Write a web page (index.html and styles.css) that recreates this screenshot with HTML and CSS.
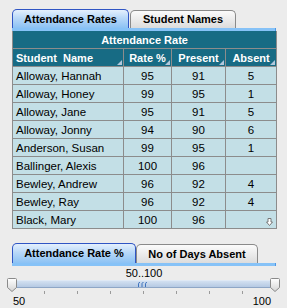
FILE: index.html
```html
<!DOCTYPE html>
<html lang="en">
<head>
    <meta charset="UTF-8">
    <title>Attendance Rates</title>
    <link rel="stylesheet" href="styles.css">
</head>
<body>
    <div class="panel">
        <div class="tabs">
            <div class="tab tab-active tab-rates">Attendance Rates</div>
            <div class="tab tab-names">Student Names</div>
        </div>
        <div class="tab-strip"></div>

        <table class="grid">
            <colgroup>
                <col class="col-name">
                <col class="col-rate">
                <col class="col-present">
                <col class="col-absent">
            </colgroup>
            <tr class="title-row"><th colspan="4">Attendance Rate</th></tr>
            <tr class="head-row">
                <th class="left">Student&nbsp; Name<span class="sort"></span></th>
                <th>Rate %<span class="sort"></span></th>
                <th>Present<span class="sort"></span></th>
                <th>Absent<span class="sort"></span></th>
            </tr>
            <tr><td class="left">Alloway, Hannah</td><td>95</td><td>91</td><td>5</td></tr>
            <tr><td class="left">Alloway, Honey</td><td>99</td><td>95</td><td>1</td></tr>
            <tr><td class="left">Alloway, Jane</td><td>95</td><td>91</td><td>5</td></tr>
            <tr><td class="left">Alloway, Jonny</td><td>94</td><td>90</td><td>6</td></tr>
            <tr><td class="left">Anderson, Susan</td><td>99</td><td>95</td><td>1</td></tr>
            <tr><td class="left">Ballinger, Alexis</td><td>100</td><td>96</td><td></td></tr>
            <tr><td class="left">Bewley, Andrew</td><td>96</td><td>92</td><td>4</td></tr>
            <tr><td class="left">Bewley, Ray</td><td>96</td><td>92</td><td>4</td></tr>
            <tr><td class="left">Black, Mary</td><td>100</td><td>96</td><td class="last-cell">
                <svg class="more" width="7" height="8" viewBox="0 0 7 8"><path d="M2 0.5h3v3.5h1.5L3.5 7.5 0.5 4H2z" fill="#fff" stroke="#777" stroke-width="1"/></svg>
            </td></tr>
        </table>

        <div class="tabs tabs-bottom">
            <div class="tab tab-active tab-rate">Attendance Rate %</div>
            <div class="tab tab-days">No of Days Absent</div>
        </div>
        <div class="tab-strip"></div>

        <div class="range-label">50..100</div>
        <div class="slider">
            <div class="track">
                <svg class="grip" width="10" height="5" viewBox="0 0 10 5"><path d="M0.5 5V1.5Q0.5 0.5 2 0.5M4 5V1.5Q4 0.5 5.5 0.5M7.5 5V1.5Q7.5 0.5 9 0.5" fill="none" stroke="#3f73bd" stroke-width="1"/></svg>
            </div>
            <svg class="thumb thumb-left" width="10" height="14" viewBox="0 0 10 14"><path d="M1.5 0.5h7a1 1 0 0 1 1 1v8l-4.5 4-4.5-4v-8a1 1 0 0 1 1-1z" fill="url(#tg)" stroke="#8a8a8a"/><defs><linearGradient id="tg" x1="0" y1="0" x2="0" y2="1"><stop offset="0" stop-color="#ffffff"/><stop offset="1" stop-color="#d4d4d4"/></linearGradient></defs></svg>
            <svg class="thumb thumb-right" width="10" height="14" viewBox="0 0 10 14"><path d="M1.5 0.5h7a1 1 0 0 1 1 1v8l-4.5 4-4.5-4v-8a1 1 0 0 1 1-1z" fill="url(#tg)" stroke="#8a8a8a"/></svg>
        </div>
        <div class="ticks">
            <span class="tick hidden"></span>
            <span class="tick"></span>
            <span class="tick"></span>
            <span class="tick"></span>
            <span class="tick"></span>
            <span class="tick"></span>
            <span class="tick"></span>
            <span class="tick"></span>
            <span class="tick hidden"></span>
        </div>
        <div class="slider-labels"><span>50</span><span>100</span></div>
    </div>
</body>
</html>
```

FILE: styles.css
```css
body {
    margin: 0;
    background: #ececec;
    font-family: 'Liberation Sans', Arial, sans-serif;
    color: #000;
}
.panel {
    width: 264px;
    padding: 9px 0 0 12px;
}
.tabs {
    display: flex;
    gap: 1px;
    height: 19px;
}
.tab {
    box-sizing: border-box;
    height: 100%;
    border: 1px solid #8a8a8a;
    border-bottom: none;
    border-radius: 5px 5px 0 0;
    background: linear-gradient(#fbfbfb, #dcdcdc);
    font-size: 11px;
    font-weight: bold;
    line-height: 18px;
    text-align: center;
}
.tab-active {
    border-color: #2f55c4;
    background: linear-gradient(#e4f0fd 0%, #b8d8f8 45%, #8cc2f4 100%);
}
.tab-rates { width: 117px; }
.tab-names { width: 106px; margin-top: 1px; height: 18px; line-height: 17px; }
.tab-strip {
    height: 3px;
    background: #86c2f7;
    border-right: 1px solid #4d97e6;
}
.grid {
    width: 264px;
    table-layout: fixed;
    border-collapse: collapse;
    font-size: 11.5px;
}
.col-name { width: 111px; }
.col-rate { width: 48px; }
.col-present { width: 54px; }
.col-absent { width: 51px; }
.grid th, .grid td {
    height: 17px;
    padding: 0 3px;
    border: 1px solid #8c8c8c;
    text-align: center;
    white-space: nowrap;
}
.grid th {
    position: relative;
    background: #176b84;
    color: #fff;
    font-size: 11px;
}
.grid td {
    background: #c3dfe6;
}
.grid .left { text-align: left; }
.title-row th {
    border-top: none;
}
.sort {
    position: absolute;
    right: 1px;
    bottom: 1px;
    border-left: 5px solid transparent;
    border-bottom: 5px solid #b3c8dc;
}
.last-cell { position: relative; }
.more {
    position: absolute;
    right: 3px;
    bottom: 2px;
}
.tabs-bottom {
    margin-top: 14px;
    height: 20px;
}
.tab-rate { width: 124px; line-height: 19px; }
.tab-days { width: 122px; margin-left: -1px; margin-top: 1px; height: 19px; line-height: 18px; }
.range-label {
    font-size: 11px;
    text-align: center;
    height: 12px;
    line-height: 12px;
    margin-top: 1px;
}
.slider {
    position: relative;
    height: 9px;
}
.track {
    box-sizing: border-box;
    height: 8px;
    margin-top: 1px;
    width: 260px;
    border-top: 1px solid #dfe9f5;
    border-bottom: 1px solid #8ea6c6;
    background: linear-gradient(#d2e0f1, #b5c9e3);
    display: flex;
    justify-content: center;
    align-items: flex-end;
}
.grip {
    display: block;
    margin-left: 2px;
}
.thumb {
    position: absolute;
    top: -2px;
}
.thumb-left { left: -5px; }
.thumb-right { left: 258px; }
.ticks {
    display: flex;
    justify-content: space-between;
    width: 265px;
    margin-left: -1px;
    height: 4px;
    margin-top: 2px;
}
.tick {
    width: 1px;
    height: 3px;
    background: #9a9a9a;
}
.tick.hidden { visibility: hidden; }
.slider-labels {
    display: flex;
    justify-content: space-between;
    width: 258px;
    padding-left: 1px;
    font-size: 11px;
    line-height: 12px;
}
```
